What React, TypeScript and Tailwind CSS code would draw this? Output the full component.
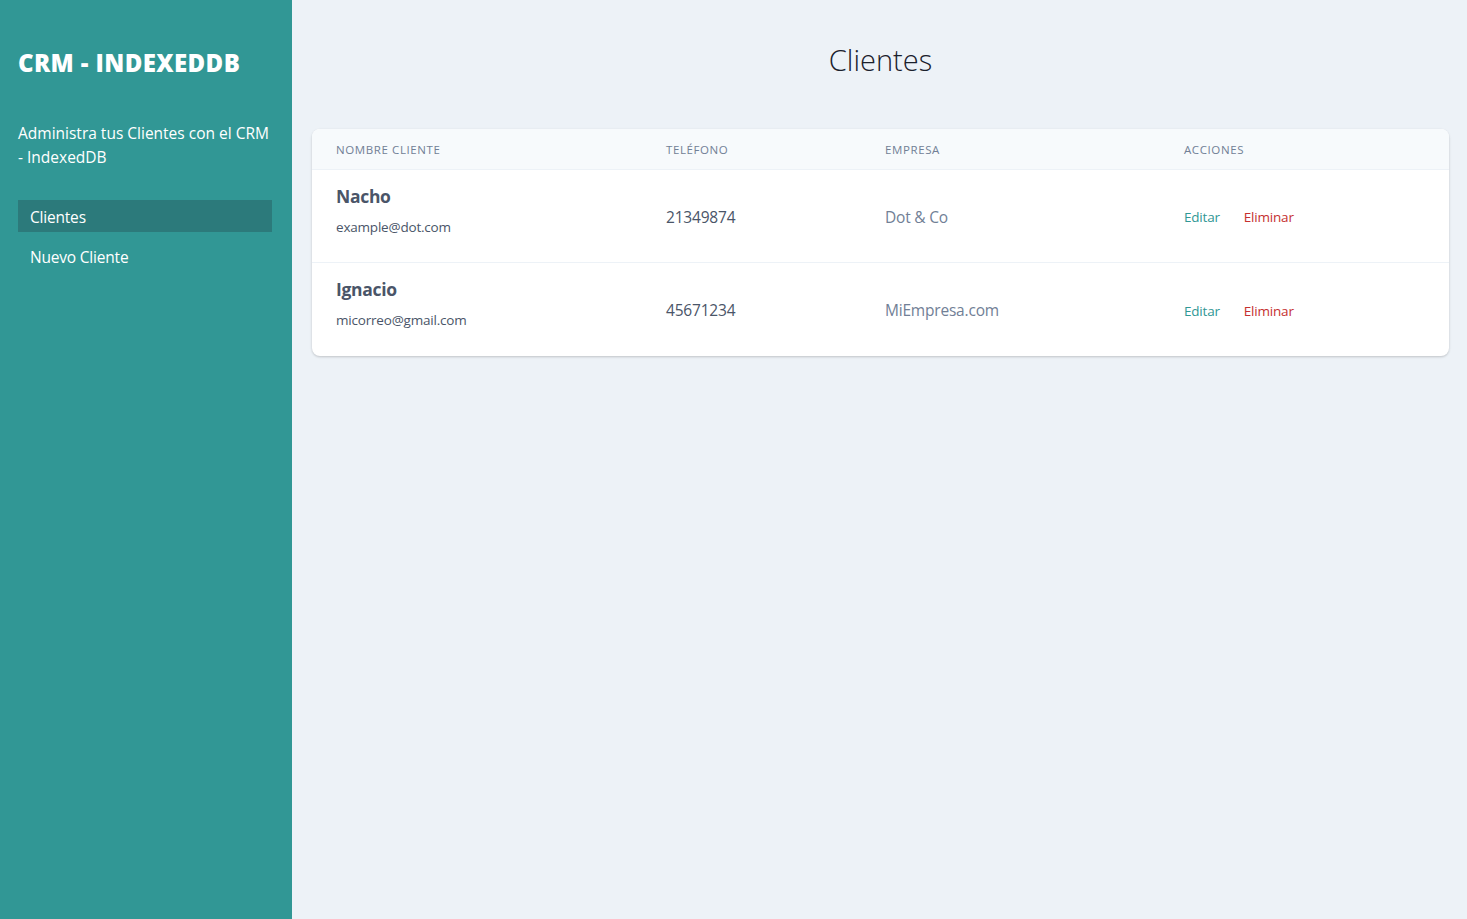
import React from "react";

const clientes = [
  { nombre: "Nacho", email: "example@dot.com", telefono: "21349874", empresa: "Dot & Co" },
  { nombre: "Ignacio", email: "micorreo@gmail.com", telefono: "45671234", empresa: "MiEmpresa.com" },
];

export default function App() {
  return (
    <div
      className="flex min-h-[919px] w-full"
      style={{ fontFamily: '"Open Sans", "Noto Sans", sans-serif' }}
    >
      <aside className="w-[292px] shrink-0 bg-[#319795] pl-[18px] pr-5 pt-[47px]">
        <h1 className="text-[24px] font-extrabold leading-8 tracking-[0.4px] text-white">CRM - INDEXEDDB</h1>
        <p className="mt-[42px] text-[15.5px] leading-6 text-white">
          Administra tus Clientes con el CRM - IndexedDB
        </p>
        <nav className="mt-[31px] flex flex-col gap-2">
          <a className="block h-8 bg-[#2c7a7b] px-3 pt-[1px] text-[15.5px] leading-8 tracking-[-0.2px] text-white">Clientes</a>
          <a className="block h-8 px-3 pt-[1px] text-[15.5px] leading-8 tracking-[-0.2px] text-white">Nuevo Cliente</a>
        </nav>
      </aside>
      <main className="flex-1 bg-[#edf2f7] pl-5 pr-[18px] pt-[42px]">
        <h2 className="text-center text-[29px] font-light leading-9 text-[#1a202c]">Clientes</h2>
        <div className="mt-[51px] overflow-hidden rounded-lg bg-white shadow-[0_1px_3px_rgba(0,0,0,0.12),0_1px_2px_rgba(0,0,0,0.08)]">
          <div className="grid h-[41px] grid-cols-[330px_219px_299px_1fr] items-center border-b border-[#edf2f7] bg-[#f7fafc] pt-[1px] text-[11.5px] uppercase tracking-[0.6px] text-[#718096]">
            <div className="px-6">Nombre Cliente</div>
            <div className="px-6">Teléfono</div>
            <div className="px-6">Empresa</div>
            <div className="px-6">Acciones</div>
          </div>
          {clientes.map((c, i) => (
            <div
              key={c.nombre}
              className={`grid grid-cols-[330px_219px_299px_1fr] ${i === 0 ? "h-[93px] border-b border-[#edf2f7]" : "h-[93px]"}`}
            >
              <div className="px-6 pt-3">
                <p className="text-[17.5px] font-bold leading-7 tracking-[-0.3px] text-[#4a5568]">{c.nombre}</p>
                <p className="mt-[7px] text-[13.5px] leading-5 tracking-[-0.2px] text-[#4a5568]">{c.email}</p>
              </div>
              <div className="flex items-center px-6 pt-[3px] text-[15.5px] tracking-[-0.2px] text-[#4a5568]">{c.telefono}</div>
              <div className="flex items-center px-6 pt-[3px] text-[15.5px] tracking-[-0.2px] text-[#718096]">{c.empresa}</div>
              <div className="flex items-center px-6 pt-[3px] text-[13.5px] tracking-[-0.2px]">
                <a className="mr-6 text-[#319795]">Editar</a>
                <a className="text-[#c53030]">Eliminar</a>
              </div>
            </div>
          ))}
        </div>
      </main>
    </div>
  );
}
